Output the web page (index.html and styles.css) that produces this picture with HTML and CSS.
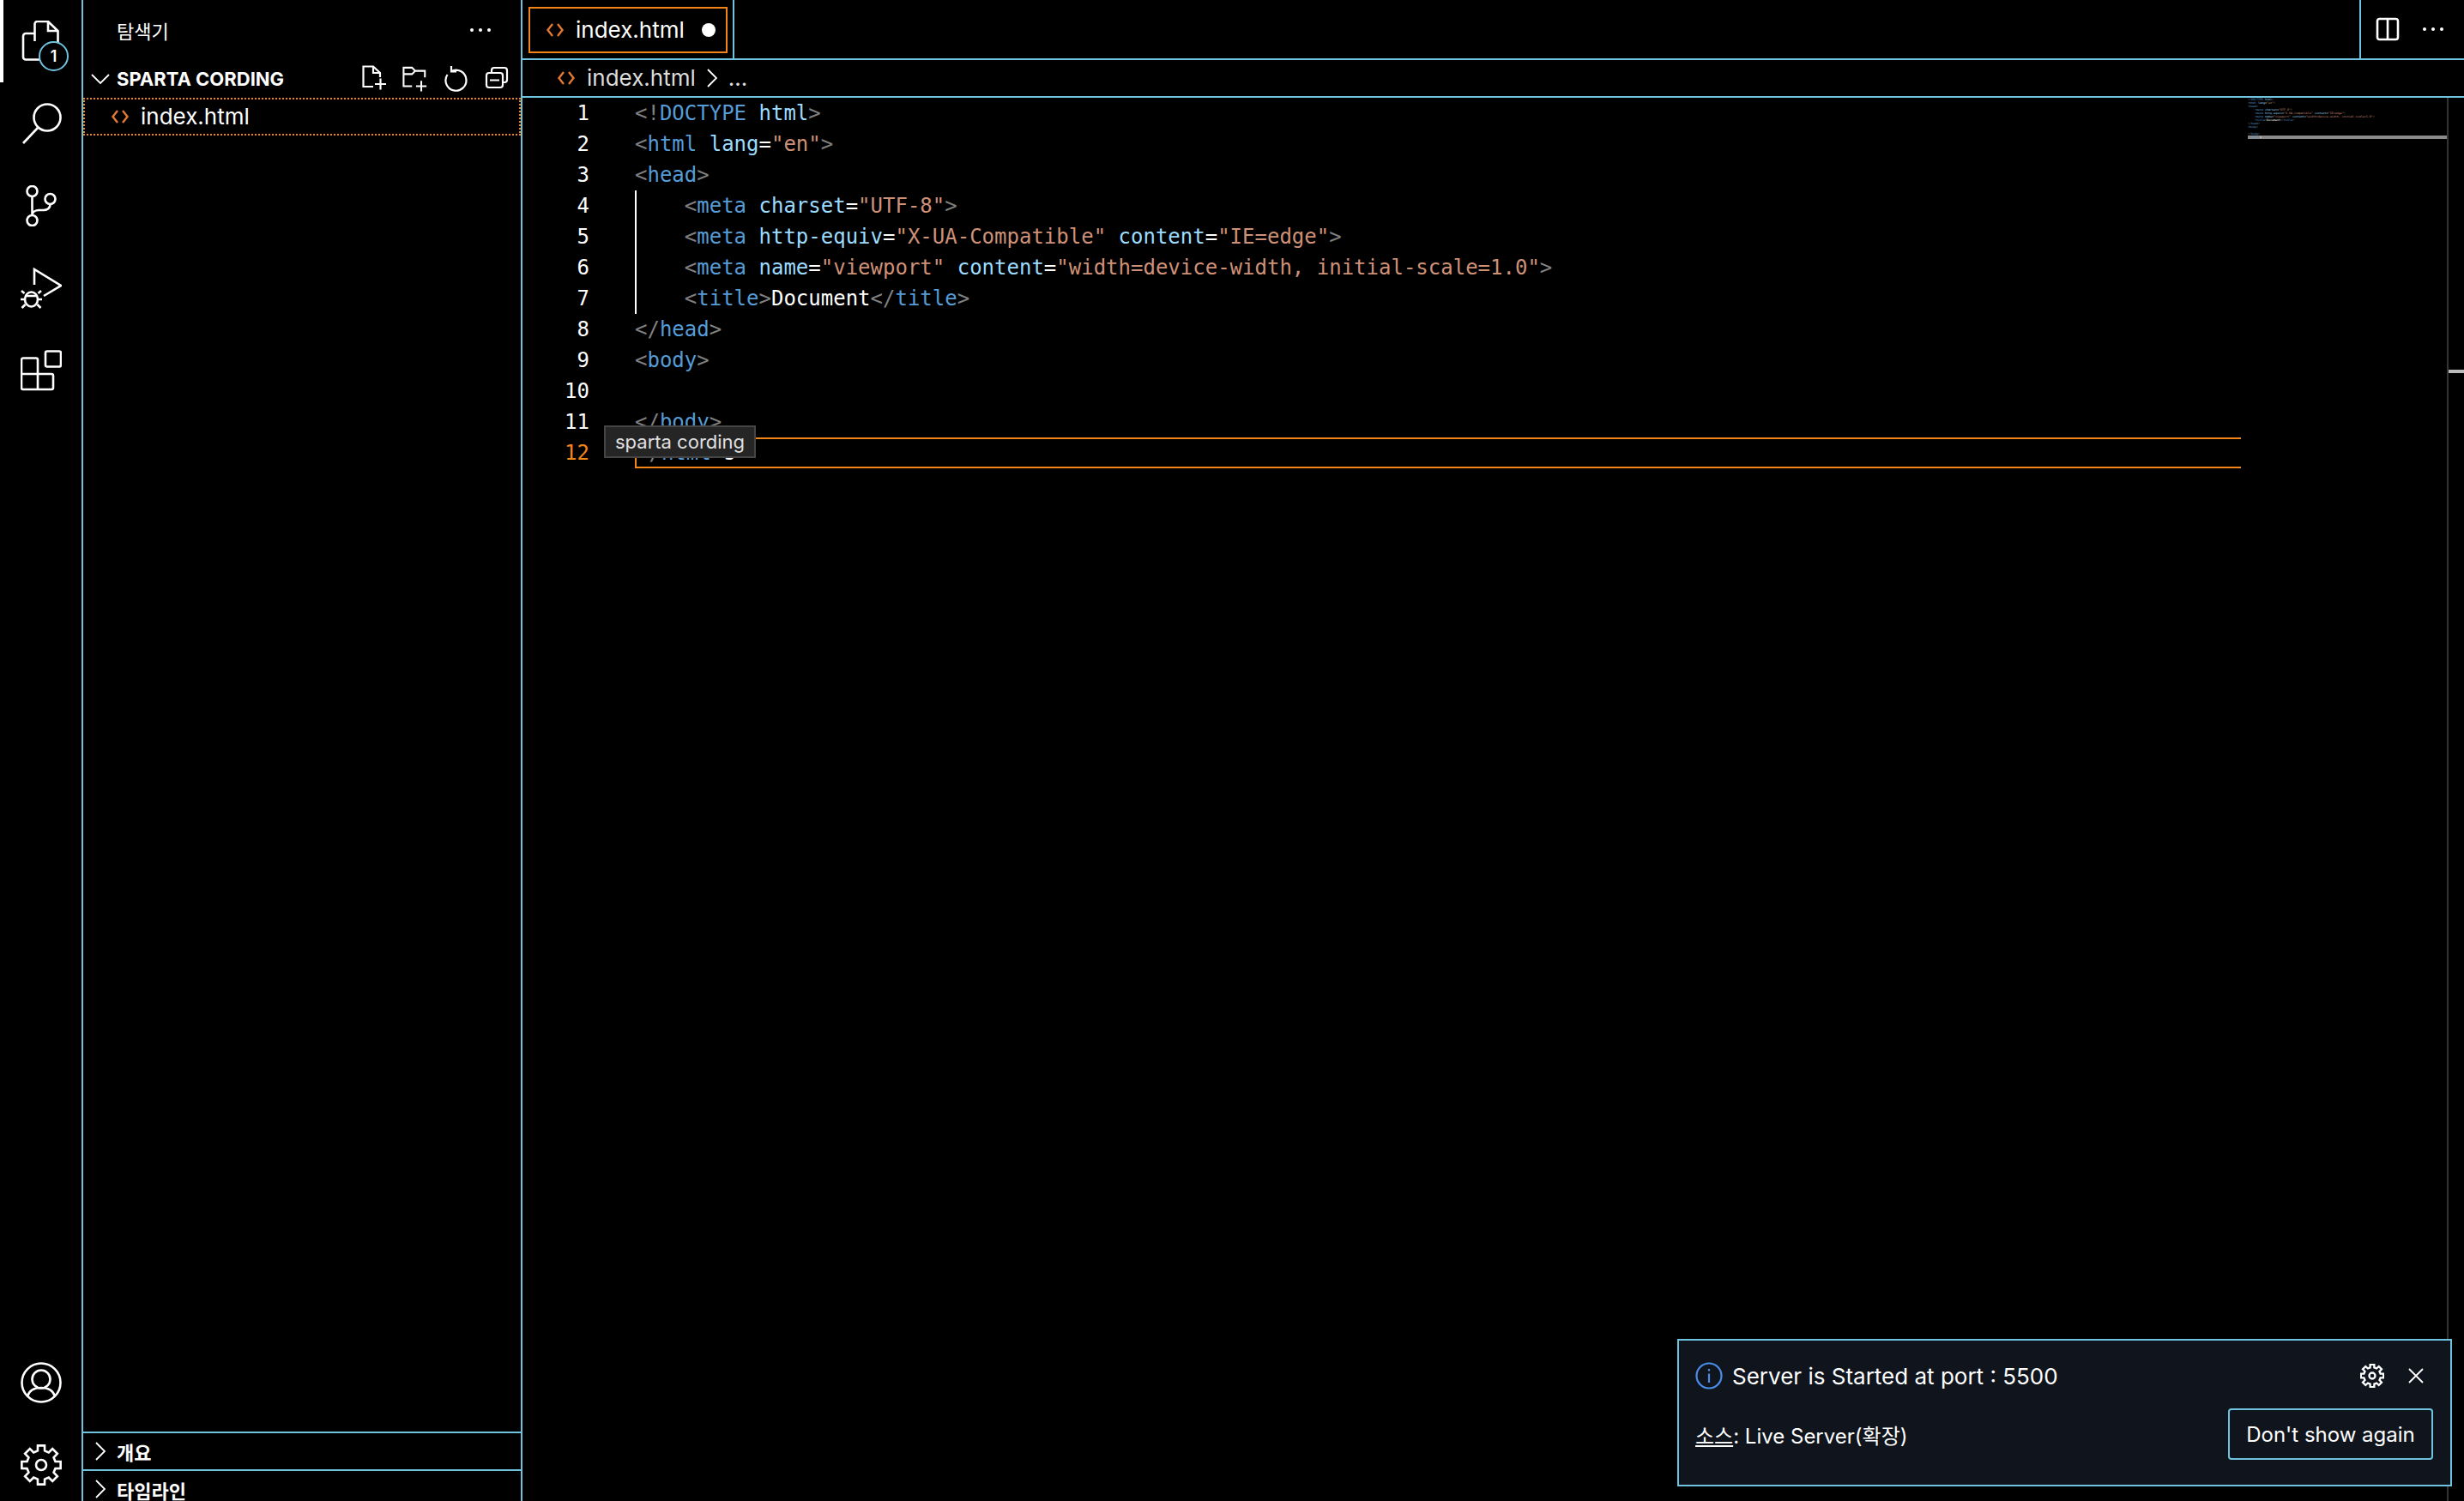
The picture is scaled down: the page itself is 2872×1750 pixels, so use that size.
FILE: index.html
```html
<!DOCTYPE html>
<html lang="ko">
<head>
<meta charset="utf-8">
<title>index.html</title>
<link rel="stylesheet" href="styles.css">
</head>
<body>
<svg class="defs" width="0" height="0" aria-hidden="true">
  <symbol id="gear" viewBox="0 0 48 48">
    <polygon points="40.5,19.9 46.65,20 46.65,28 40.5,28.1 38.57,32.76 42.84,37.19 37.19,42.84 32.76,38.57 28.1,40.5 28,46.65 20,46.65 19.9,40.5 15.24,38.57 10.81,42.84 5.16,37.19 9.43,32.76 7.5,28.1 1.35,28 1.35,20 7.5,19.9 9.43,15.24 5.16,10.81 10.81,5.16 15.24,9.43 19.9,7.5 20,1.35 28,1.35 28.1,7.5 32.76,9.43 37.19,5.16 42.84,10.81 38.57,15.24"/>
    <circle cx="24" cy="24" r="6"/>
  </symbol>
  <symbol id="html" viewBox="0 0 22 20">
    <path d="M8 3 2.5 10 8 17M14 3l5.500 7L14 17"/>
  </symbol>
</svg>
<div class="app">
  <nav class="activity">
    <div class="act-top">
      <div class="act-item active">
        <svg class="icon" width="48" height="48" viewBox="0 0 48 48"><path d="M16.500 24V4a3 3 0 0 1 3-3H32l11.500 11V30M32 1v11h11.500M16 15H6a3 3 0 0 0-3 3v24.500a3 3 0 0 0 3 3h18"/></svg>
        <span class="badge">1</span>
      </div>
      <div class="act-item"><svg class="icon" width="48" height="48" viewBox="0 0 48 48"><circle cx="31" cy="17" r="15.500"/><path d="M20 29 3 47"/></svg></div>
      <div class="act-item"><svg class="icon" width="48" height="48" viewBox="0 0 48 48"><circle cx="13.500" cy="7" r="6"/><circle cx="13.500" cy="41" r="6"/><circle cx="34.500" cy="16" r="6"/><path d="M13.500 13v22M34.500 22c0 5-4 7-8 7h-5c-4 0-8 2-8 6"/></svg></div>
      <div class="act-item"><svg class="icon" width="48" height="48" viewBox="0 0 48 48"><path d="M16 20V2l31 19-20 12"/><ellipse cx="12.500" cy="37" rx="7.500" ry="8.500"/><path d="M5 33h15M4.500 30 1 27M20.500 30l3.500-3M4 37H0M21 37h4M5.500 43 1.500 47M19.500 43l4 4"/></svg></div>
      <div class="act-item"><svg class="icon" width="48" height="48" viewBox="0 0 48 48"><rect x="29" y="1.500" width="18" height="18" rx="2"/><path d="M3 9.500h15a2 2 0 0 1 2 2v16.500h16a2 2 0 0 1 2 2V44a2 2 0 0 1-2 2H3a2 2 0 0 1-2-2V11.500a2 2 0 0 1 2-2ZM1 28h19v18"/></svg></div>
    </div>
    <div class="act-bottom">
      <svg class="icon" width="48" height="48" viewBox="0 0 48 48"><circle cx="24" cy="24" r="22.500"/><circle cx="24" cy="20" r="10.500"/><path d="M8 40c2-7 8-10 16-10s14 3 16 10"/></svg>
      <svg class="icon" width="48" height="48"><use href="#gear"/></svg>
    </div>
  </nav>

  <aside class="sidebar">
    <header class="side-title">
      <span class="cjk">탐색기</span>
      <span class="dots"><i></i><i></i><i></i></span>
    </header>
    <div class="section-head">
      <svg class="icon thin" width="22" height="14" viewBox="0 0 22 14"><path d="M1 2l10 10L21 2"/></svg>
      <span class="section-name">SPARTA CORDING</span>
      <div class="section-tools">
        <svg class="icon tool" width="30" height="32" viewBox="0 0 30 32"><path d="M13 25H1.500V1.500H13L21 9v5M13 1.500V9h8M15 22h13M21.500 15.500v13"/></svg>
        <svg class="icon tool" width="30" height="32" viewBox="0 0 32 32"><path d="M12 25H1.500V2H12l4 4h12v8M1.500 10H12l4-4M17 25h13M23.500 18.500v13"/></svg>
        <svg class="icon tool" width="30" height="32" viewBox="0 0 30 32"><path d="M10 7A12 12 0 1 1 5.500 11M10 1v6.500H16"/></svg>
        <svg class="icon tool" width="30" height="32" viewBox="0 0 30 32"><rect x="4" y="9" width="19" height="17" rx="3"/><path d="M10 9V6a3 3 0 0 1 3-3h12a3 3 0 0 1 3 3v11a3 3 0 0 1-3 3h-2M8 17.500h11"/></svg>
      </div>
    </div>
    <div class="file-row">
      <svg class="html-icon" width="22" height="20"><use href="#html"/></svg>
      <span class="ui-text">index.html</span>
    </div>
    <div class="side-fill"></div>
    <div class="panel">
      <svg class="icon thin" width="14" height="22" viewBox="0 0 14 22"><path d="M2 1l10 10L2 21"/></svg>
      <span class="panel-name cjk">개요</span>
    </div>
    <div class="panel last">
      <svg class="icon thin" width="14" height="22" viewBox="0 0 14 22"><path d="M2 1l10 10L2 21"/></svg>
      <span class="panel-name cjk">타임라인</span>
    </div>
  </aside>

  <main class="main">
    <div class="tabs">
      <div class="tab-cell">
        <div class="tab">
          <svg class="html-icon" width="22" height="20"><use href="#html"/></svg>
          <span class="ui-text">index.html</span>
          <span class="dirty"></span>
        </div>
      </div>
      <div class="tab-actions">
        <svg class="icon" width="28" height="28" viewBox="0 0 28 28"><rect x="2" y="2" width="24" height="24" rx="2.500"/><path d="M14 2v24"/></svg>
        <span class="dots"><i></i><i></i><i></i></span>
      </div>
    </div>
    <div class="crumbs">
      <svg class="html-icon" width="22" height="20"><use href="#html"/></svg>
      <span class="ui-text dim">index.html</span>
      <svg class="icon thin" width="12" height="22" viewBox="0 0 12 22"><path d="M1 1l10 10L1 21"/></svg>
      <span class="ui-text dim">...</span>
    </div>
    <div class="editor">
      <div class="gutter">
        <div>1</div><div>2</div><div>3</div><div>4</div><div>5</div><div>6</div><div>7</div><div>8</div><div>9</div><div>10</div><div>11</div><div class="cur">12</div>
      </div>
      <div class="code">
        <span class="guide"></span>
        <div class="ln"><b>&lt;!</b><u>DOCTYPE</u> <s>html</s><b>&gt;</b></div>
        <div class="ln"><b>&lt;</b><u>html</u> <s>lang</s><em>=</em><q>"en"</q><b>&gt;</b></div>
        <div class="ln"><b>&lt;</b><u>head</u><b>&gt;</b></div>
        <div class="ln">    <b>&lt;</b><u>meta</u> <s>charset</s><em>=</em><q>"UTF-8"</q><b>&gt;</b></div>
        <div class="ln">    <b>&lt;</b><u>meta</u> <s>http-equiv</s><em>=</em><q>"X-UA-Compatible"</q> <s>content</s><em>=</em><q>"IE=edge"</q><b>&gt;</b></div>
        <div class="ln">    <b>&lt;</b><u>meta</u> <s>name</s><em>=</em><q>"viewport"</q> <s>content</s><em>=</em><q>"width=device-width, initial-scale=1.0"</q><b>&gt;</b></div>
        <div class="ln">    <b>&lt;</b><u>title</u><b>&gt;</b><em>Document</em><b>&lt;/</b><u>title</u><b>&gt;</b></div>
        <div class="ln"><b>&lt;/</b><u>head</u><b>&gt;</b></div>
        <div class="ln"><b>&lt;</b><u>body</u><b>&gt;</b></div>
        <div class="ln"> </div>
        <div class="ln"><b>&lt;/</b><u>body</u><b>&gt;</b></div>
        <div class="ln current"><b>&lt;/</b><u>html</u><b>&gt;</b><em>s</em></div>
      </div>
      <div class="minimap">
        <div class="mm"><b>&lt;!</b><u>DOCTYPE</u> <s>html</s><b>&gt;</b></div>
        <div class="mm"><b>&lt;</b><u>html</u> <s>lang</s><em>=</em><q>"en"</q><b>&gt;</b></div>
        <div class="mm"><b>&lt;</b><u>head</u><b>&gt;</b></div>
        <div class="mm">    <b>&lt;</b><u>meta</u> <s>charset</s><em>=</em><q>"UTF-8"</q><b>&gt;</b></div>
        <div class="mm">    <b>&lt;</b><u>meta</u> <s>http-equiv</s><em>=</em><q>"X-UA-Compatible"</q> <s>content</s><em>=</em><q>"IE=edge"</q><b>&gt;</b></div>
        <div class="mm">    <b>&lt;</b><u>meta</u> <s>name</s><em>=</em><q>"viewport"</q> <s>content</s><em>=</em><q>"width=device-width, initial-scale=1.0"</q><b>&gt;</b></div>
        <div class="mm">    <b>&lt;</b><u>title</u><b>&gt;</b><em>Document</em><b>&lt;/</b><u>title</u><b>&gt;</b></div>
        <div class="mm"><b>&lt;/</b><u>head</u><b>&gt;</b></div>
        <div class="mm"><b>&lt;</b><u>body</u><b>&gt;</b></div>
        <div class="mm"> </div>
        <div class="mm"><b>&lt;/</b><u>body</u><b>&gt;</b></div>
        <div class="mm mm-cur"><b>&lt;/</b><u>html</u><b>&gt;</b><em>s</em></div>
      </div>
      <div class="scroll"><span class="marker"></span></div>
      <div class="tooltip">sparta cording</div>
    </div>
  </main>
</div>

<section class="toast">
  <div class="toast-top">
    <svg class="info" width="32" height="32" viewBox="0 0 32 32"><circle cx="16" cy="16" r="14.500"/><path d="M16 13.500V24M16 8v2.500"/></svg>
    <span class="toast-msg">Server is Started at port : 5500</span>
    <svg class="icon toast-gear" width="28" height="28"><use href="#gear"/></svg>
    <svg class="icon toast-x" width="20" height="20" viewBox="0 0 20 20"><path d="M2 2l16 16M18 2 2 18"/></svg>
  </div>
  <div class="toast-bottom">
    <span class="toast-src"><span class="und">소스</span>: Live Server(확장)</span>
    <button class="toast-btn">Don't show again</button>
  </div>
</section>
</body>
</html>
```
FILE: styles.css
```css
:root {
  --line: #6fc3df;
  --orange: #f38518;
  --html: #e37933;
  --ui: Inter, "Noto Sans CJK KR", "Liberation Sans", sans-serif;
  --mono: "DejaVu Sans Mono", "Liberation Mono", monospace;
}
* { box-sizing: border-box; }
html, body { margin: 0; height: 100%; background: #000; }
body {
  position: relative;
  width: 2872px;
  height: 1750px;
  overflow: hidden;
  color: #fff;
  font-family: var(--ui);
}
.defs { position: absolute; }
.app { display: flex; height: 100%; }

.icon { fill: none; stroke: #fff; stroke-width: 2.6; display: block; flex: none; }
.icon.thin { stroke-width: 1.8; }
.icon.tool { stroke-width: 2.2; }
.html-icon { fill: none; stroke: var(--html); stroke-width: 2.4; flex: none; display: block; }
.cjk { font-family: "Noto Sans CJK KR", sans-serif; }
.ui-text { font-size: 26px; line-height: 36px; color: #fff; white-space: pre; }
.ui-text.dim { color: #ddd; }

/* Activity bar */
.activity {
  width: 97px;
  flex: none;
  border-right: 2px solid var(--line);
  display: flex;
  flex-direction: column;
  justify-content: space-between;
}
.act-item {
  position: relative;
  height: 96px;
  display: flex;
  align-items: center;
  justify-content: center;
}
.act-item.active { box-shadow: inset 4px 0 0 #fff; }
.badge {
  position: absolute;
  left: 45px;
  top: 48px;
  width: 35px;
  height: 35px;
  border: 2px solid var(--line);
  border-radius: 50%;
  background: #000;
  font-size: 18px;
  font-weight: 600;
  line-height: 31px;
  text-align: center;
}
.act-bottom {
  display: flex;
  flex-direction: column;
  align-items: center;
  gap: 48px;
  padding-bottom: 18px;
}

/* Sidebar */
.sidebar {
  width: 512px;
  flex: none;
  border-right: 2px solid var(--line);
  display: flex;
  flex-direction: column;
  overflow: hidden;
}
.side-title {
  height: 70px;
  flex: none;
  padding: 0 35px 0 39px;
  display: flex;
  align-items: center;
  justify-content: space-between;
  font-size: 22px;
}
.dots { display: flex; gap: 6px; }
.dots i { width: 4px; height: 4px; border-radius: 50%; background: #fff; display: block; }
.section-head {
  height: 44px;
  flex: none;
  display: flex;
  align-items: center;
  padding: 0 14px 0 9px;
}
.section-name {
  margin-left: 8px;
  font-size: 22px;
  font-weight: 700;
  white-space: pre;
}
.section-tools { margin-left: auto; display: flex; gap: 17px; }
.file-row {
  height: 44px;
  flex: none;
  display: flex;
  align-items: center;
  gap: 13px;
  padding-left: 32px;
  outline: 2px dotted var(--orange);
  outline-offset: -2px;
}
.side-fill { flex: 1; min-height: 0; }
.panel {
  height: 44px;
  flex: none;
  border-top: 2px solid var(--line);
  display: flex;
  align-items: center;
  padding-left: 13px;
}
.panel.last { height: 37px; align-items: flex-start; padding-top: 10px; }
.panel-name { margin-left: 12px; font-size: 22px; font-weight: 700; line-height: 24px; }

/* Main */
.main { flex: 1; min-width: 0; display: flex; flex-direction: column; }
.tabs {
  height: 70px;
  flex: none;
  border-bottom: 2px solid var(--line);
  display: flex;
  justify-content: space-between;
}
.tab-cell {
  width: 247px;
  border-right: 2px solid var(--line);
  padding: 8px 6px 6px 7px;
}
.tab {
  height: 54px;
  border: 2px solid var(--orange);
  display: flex;
  align-items: center;
  padding: 0 12px 0 18px;
  gap: 13px;
}
.dirty { width: 16px; height: 16px; margin-left: auto; border-radius: 50%; background: #fff; }
.tab-actions {
  width: 122px;
  border-left: 2px solid var(--line);
  display: flex;
  align-items: center;
  gap: 27px;
  padding-left: 17px;
}
.tab-actions .dots { gap: 6px; }
.crumbs {
  height: 44px;
  flex: none;
  border-bottom: 2px solid var(--line);
  display: flex;
  align-items: center;
  padding-left: 40px;
  gap: 13px;
}

/* Editor */
.editor { position: relative; flex: 1; min-height: 0; display: flex; font-family: var(--mono); }
.gutter {
  width: 78px;
  flex: none;
  text-align: right;
  font-size: 24px;
  line-height: 36px;
  color: #fff;
}
.gutter .cur { color: var(--orange); }
.code {
  position: relative;
  margin-left: 53px;
  width: 1872px;
  flex: none;
  font-size: 24px;
  line-height: 36px;
}
.ln { height: 36px; white-space: pre; }
.ln.current {
  margin-left: 0;
  border: solid var(--orange);
  border-width: 2px 0 2px 2px;
  line-height: 32px;
  padding-left: 0;
}
.guide { position: absolute; left: 0; top: 108px; width: 2px; height: 144px; background: #fff; }
.ln b, .mm b { font-weight: 400; color: #808080; }
.ln u, .mm u { text-decoration: none; color: #569cd6; }
.ln s, .mm s { text-decoration: none; color: #9cdcfe; }
.ln q, .mm q { quotes: none; color: #ce9178; }
.ln em, .mm em { font-style: normal; color: #fff; }
.minimap { width: 240px; flex: none; padding-left: 8px; font-size: 3.32px; line-height: 4px; }
.mm { height: 4px; white-space: pre; overflow: hidden; }
.mm-cur { background: #8a8a8a; }
.scroll { position: relative; flex: 1; border-left: 2px solid #333; }
.marker { position: absolute; left: 0; right: 0; top: 317px; height: 4px; background: #bbb; }
.tooltip {
  position: absolute;
  left: 95px;
  top: 382px;
  height: 38px;
  padding: 0 11px;
  background: #252526;
  border: 2px solid #454545;
  font-family: var(--ui);
  font-size: 22px;
  line-height: 34px;
  color: #e0e0e0;
  white-space: nowrap;
}

/* Notification */
.toast {
  position: absolute;
  right: 14px;
  bottom: 17px;
  width: 903px;
  height: 172px;
  border: 2px solid var(--line);
  background: #10151d;
  padding: 25px 20px 0 19px;
}
.toast-top { display: flex; align-items: center; height: 32px; }
.info { fill: none; stroke: #4a8eea; stroke-width: 2.2; flex: none; }
.toast-msg { margin-left: 11px; font-size: 26px; }
.toast-gear { margin-left: auto; stroke-width: 4; }
.toast-x { margin: 0 10px 0 27px; stroke-width: 1.8; }
.toast-bottom {
  display: flex;
  align-items: center;
  justify-content: space-between;
  margin-top: 22px;
}
.toast-src { font-size: 24px; }
.und { text-decoration: underline; }
.toast-btn {
  width: 239px;
  height: 60px;
  border: 2px solid var(--line);
  border-radius: 4px;
  background: transparent;
  color: #fff;
  font-family: var(--ui);
  font-size: 24px;
  padding: 0;
}
```
